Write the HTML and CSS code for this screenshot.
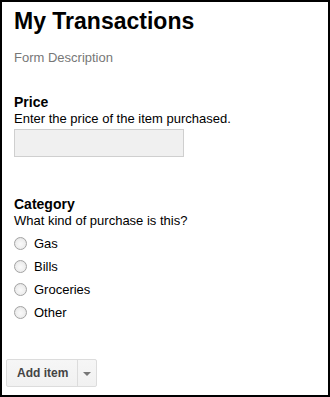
FILE: index.html
```html
<!DOCTYPE html>
<html>
<head>
<meta charset="utf-8">
<link rel="stylesheet" href="styles.css">
</head>
<body>
<div class="frame">
  <div class="content">
    <h1 class="title">My Transactions</h1>
    <div class="desc">Form Description</div>

    <div class="question q-price">
      <div class="q-title">Price</div>
      <div class="q-help">Enter the price of the item purchased.</div>
      <div class="text-input"></div>
    </div>

    <div class="question q-category">
      <div class="q-title">Category</div>
      <div class="q-help">What kind of purchase is this?</div>
      <ul class="options">
        <li class="option"><span class="radio"></span><span>Gas</span></li>
        <li class="option"><span class="radio"></span><span>Bills</span></li>
        <li class="option"><span class="radio"></span><span>Groceries</span></li>
        <li class="option"><span class="radio"></span><span>Other</span></li>
      </ul>
    </div>
  </div>

  <div class="split-button">
    <div class="btn-main">Add item</div>
    <div class="btn-menu"><span class="caret"></span></div>
  </div>
</div>
</body>
</html>
```

FILE: styles.css
```css
html, body {
  margin: 0;
  padding: 0;
  background: #fff;
}
body {
  font-family: "Liberation Sans", Arial, sans-serif;
  color: #000;
}
.frame {
  box-sizing: border-box;
  width: 330px;
  height: 397px;
  border: 2px solid #000;
  padding: 5px 0 0 4px;
}
.content {
  padding-left: 8px;
}
.title {
  margin: 0;
  font-size: 23px;
  line-height: 28px;
  font-weight: bold;
}
.desc {
  margin-top: 15px;
  font-size: 13px;
  line-height: 16px;
  color: #777;
}
.question {
  display: flex;
  flex-direction: column;
}
.q-price {
  margin-top: 28px;
}
.q-category {
  margin-top: 39px;
}
.q-title {
  font-size: 14px;
  line-height: 17px;
  font-weight: bold;
}
.q-help {
  font-size: 13px;
  line-height: 15px;
}
.text-input {
  box-sizing: border-box;
  margin-top: 3px;
  width: 170px;
  height: 28px;
  background: #f0f0f0;
  border: 1px solid #cfcfcf;
}
.options {
  list-style: none;
  margin: 4px 0 0;
  padding: 0;
}
.option {
  display: flex;
  align-items: center;
  gap: 7px;
  height: 23px;
  font-size: 13px;
  line-height: 23px;
}
.radio {
  box-sizing: border-box;
  width: 13px;
  height: 13px;
  border-radius: 50%;
  border: 1px solid #a3a3a3;
  background: radial-gradient(circle at 50% 55%, #fafafa 0%, #eeeeee 55%, #d8d8d8 100%);
  flex: none;
}
.split-button {
  display: flex;
  margin-top: 35px;
  width: 91px;
  height: 28px;
  box-sizing: border-box;
  border: 1px solid #dcdcdc;
  border-radius: 2px;
  background: linear-gradient(#f6f6f6, #f1f1f1);
}
.btn-main {
  box-sizing: border-box;
  width: 71px;
  padding-left: 10px;
  font-size: 12px;
  font-weight: bold;
  line-height: 26px;
  color: #444;
  border-right: 1px solid #dcdcdc;
}
.btn-menu {
  flex: 1;
  display: flex;
  align-items: center;
  justify-content: center;
}
.caret {
  width: 0;
  height: 0;
  border-left: 4px solid transparent;
  border-right: 4px solid transparent;
  border-top: 4px solid #777;
  margin-top: 1px;
}
```
